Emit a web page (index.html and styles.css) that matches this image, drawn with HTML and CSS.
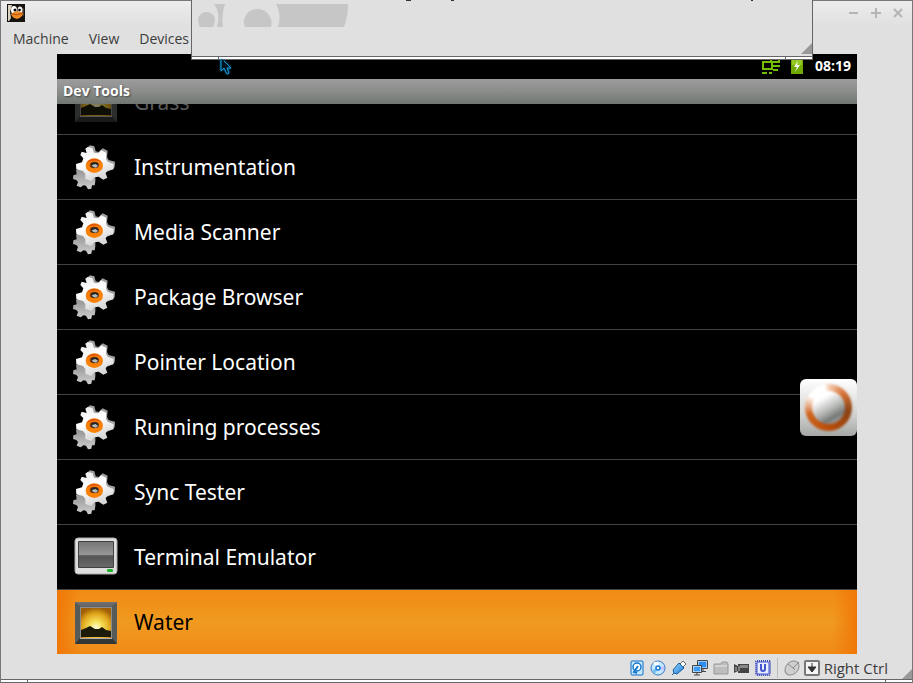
FILE: index.html
```html
<!DOCTYPE html>
<html lang="en">
<head>
    <meta charset="UTF-8">
    <meta name="viewport" content="width=device-width, initial-scale=1.0">
    <title>Dev Tools</title>
    <link rel="stylesheet" href="styles.css">
</head>
<body>
    <!-- shared icons -->
    <svg class="defs" width="0" height="0" aria-hidden="true">
        <defs>
            <linearGradient id="gear-face" x1="0" y1="0" x2="0.4" y2="1">
                <stop offset="0" stop-color="#e8e8e8"/>
                <stop offset="0.5" stop-color="#fff"/>
                <stop offset="1" stop-color="#d8d8d8"/>
            </linearGradient>
            <linearGradient id="gear-back" x1="0" y1="0" x2="0" y2="1">
                <stop offset="0" stop-color="#8d8d8d"/>
                <stop offset="1" stop-color="#cfcfcf"/>
            </linearGradient>
            <radialGradient id="sun" cx="0.5" cy="0.65" r="0.65">
                <stop offset="0" stop-color="#fffde0"/>
                <stop offset="0.3" stop-color="#f8e25a"/>
                <stop offset="0.7" stop-color="#dfa51b"/>
                <stop offset="1" stop-color="#a05f05"/>
            </radialGradient>
            <linearGradient id="frame" x1="0" y1="0" x2="0" y2="1">
                <stop offset="0" stop-color="#727272"/>
                <stop offset="0.3" stop-color="#454a49"/>
                <stop offset="1" stop-color="#303433"/>
            </linearGradient>
            <linearGradient id="glass" x1="0" y1="0" x2="0" y2="1">
                <stop offset="0" stop-color="#777"/>
                <stop offset="0.5" stop-color="#969696"/>
                <stop offset="0.55" stop-color="#555"/>
                <stop offset="1" stop-color="#686868"/>
            </linearGradient>
            <linearGradient id="blue" x1="0" y1="0" x2="1" y2="1">
                <stop offset="0" stop-color="#9ddcff"/>
                <stop offset="1" stop-color="#1475d8"/>
            </linearGradient>
        </defs>
        <symbol id="icon-gear" viewBox="0 0 150 150">
            <path fill="url(#gear-back)" d="M18 84L40 76L82 94L76 106L76 118L74 130L66 130L64 140L54 142L48 131L40 130L32 136L20 131L24 120L19 114L9 111L10 100L20 97Z"/>
            <path fill="#a0a0a0" d="M48 20L60 10L73 13L77 28L86 30L98 19L113 26L111 45L116 54L135 59L134 75L129 82L100 94L60 78L42 46L53 36Z"/>
            <path fill="url(#gear-face)" d="M46 20L53 15L67 18L72 32L85 34L93 25L109 32L108 51L113 59L131 66L130 82L112 86L107 94L112 107L100 113L86 104L73 106L64 117L46 111L46 96L39 87L19 82L18 66L36 61L40 49L31 39L35 29L50 33Z"/>
            <ellipse cx="73" cy="71" rx="26" ry="22" fill="#fa8208"/>
            <path d="M49 65Q54 51 73 50Q88 51 96 62Q84 54 71 56Q57 56 49 65Z" fill="#e0560a"/>
            <ellipse cx="73" cy="69" rx="14" ry="10" fill="#8a3a08"/>
            <ellipse cx="74" cy="69" rx="11" ry="8" fill="#252525"/>
            <path d="M65 70L76 66L84 71L78 77L70 75Z" fill="#b4bcbc"/>
        </symbol>
        <symbol id="icon-picture" viewBox="0 0 42 42">
            <rect width="42" height="42" rx="1" fill="url(#frame)"/>
            <path d="M0 0L5 4V36L0 42ZM42 0L37 4V36L42 42Z" fill="#565b5a"/>
            <rect x="5.500" y="5.500" width="31" height="31" fill="url(#sun)" stroke="#8d8d8d"/>
            <path d="M6 28L11 26L15 24L20 27L24 27L27 25L31 28L36 29V35H6Z" fill="#1d1c0b"/>
            <path d="M5 36.500H37" stroke="#b0b0b0"/>
        </symbol>
        <symbol id="icon-terminal" viewBox="0 0 44 38">
            <rect x="1" y="1" width="42" height="36" rx="3" fill="#dedede" stroke="#aaa"/>
            <rect x="4" y="4" width="36" height="27" rx="1" fill="#404040"/>
            <rect x="5" y="5" width="34" height="25" fill="url(#glass)"/>
            <rect x="33" y="32" width="6" height="3" rx="1" fill="#20b42d"/>
        </symbol>
    </svg>

    <div class="window">
        <header class="titlebar">
            <svg class="app-icon" viewBox="0 0 18 18" width="18" height="18" aria-hidden="true">
                <rect width="18" height="18" fill="#17130f"/>
                <path d="M1 1H5L3 8L4 14L2 17H1Z" fill="#d8d1bd"/>
                <path d="M12 2L17 5V13L14 9Z" fill="#4a3a2d"/>
                <ellipse cx="7" cy="6" rx="3" ry="4" fill="#fff"/>
                <ellipse cx="13" cy="6" rx="2.500" ry="3.500" fill="#eee"/>
                <circle cx="8" cy="6" r="1.500"/>
                <circle cx="12.500" cy="6" r="1.300"/>
                <path d="M4 10Q9 5 16 9Q16 13 10 15Q5 14 4 10Z" fill="#f08a24"/>
                <path d="M5 10Q10 12 16 9" fill="none" stroke="#b74e0b"/>
            </svg>
            <div class="window-buttons">
                <button type="button" aria-label="Minimize"><svg viewBox="0 0 10 10" width="10" height="10"><path d="M0 5H9"/></svg></button>
                <button type="button" aria-label="Maximize"><svg viewBox="0 0 10 10" width="10" height="10"><path d="M0 5H10M5 0V10"/></svg></button>
                <button type="button" aria-label="Close"><svg viewBox="0 0 10 10" width="10" height="10"><path d="M1 1L9 9M9 1L1 9"/></svg></button>
            </div>
        </header>
        <nav class="menubar">
            <button type="button">Machine</button>
            <button type="button">View</button>
            <button type="button">Devices</button>
        </nav>

        <main class="screen">
            <div class="status-bar">
                <svg viewBox="0 0 19 16" width="19" height="16" aria-hidden="true">
                    <path d="M1 4H10V11H1ZM0 15H5M7 15H10M9 1V3M11 4H14M11 8H18M11 12H16M13 4H17V0" fill="none" stroke="#74bd00" stroke-width="2"/>
                </svg>
                <svg viewBox="0 0 12 16" width="12" height="16" aria-hidden="true">
                    <path d="M3 0H9V1H12V16H0V1H3Z" fill="#70a900"/>
                    <path d="M1 2H11V7H1Z" fill="#95ca25"/>
                    <path d="M7 3L3 9H6L4 14L9 7H6Z" fill="#fff"/>
                </svg>
                <time>08:19</time>
            </div>
            <h1 class="app-title">Dev Tools</h1>
            <div class="list">
                <a class="row faded" href="#"><svg class="row-icon"><use href="#icon-picture" x="5" y="3" width="42" height="42"/></svg>Grass</a>
                <a class="row" href="#"><svg class="row-icon"><use href="#icon-gear" width="50" height="50"/></svg>Instrumentation</a>
                <a class="row" href="#"><svg class="row-icon"><use href="#icon-gear" width="50" height="50"/></svg>Media Scanner</a>
                <a class="row" href="#"><svg class="row-icon"><use href="#icon-gear" width="50" height="50"/></svg>Package Browser</a>
                <a class="row" href="#"><svg class="row-icon"><use href="#icon-gear" width="50" height="50"/></svg>Pointer Location</a>
                <a class="row" href="#"><svg class="row-icon"><use href="#icon-gear" width="50" height="50"/></svg>Running processes</a>
                <a class="row" href="#"><svg class="row-icon"><use href="#icon-gear" width="50" height="50"/></svg>Sync Tester</a>
                <a class="row" href="#"><svg class="row-icon"><use href="#icon-terminal" x="4" y="5" width="44" height="38"/></svg>Terminal Emulator</a>
                <a class="row selected" href="#"><svg class="row-icon"><use href="#icon-picture" x="5" y="5" width="42" height="42"/></svg>Water</a>
            </div>
            <button type="button" class="touch-button" aria-label="Menu"><span class="ring"><span class="ball"></span></span></button>
        </main>

        <footer class="vm-status">
            <div class="devices">
                <svg viewBox="0 0 16 16" width="16" height="16" aria-hidden="true">
                    <rect x="2" y="1" width="12" height="14" rx="1" fill="#c5eaff" stroke="#126bc4"/>
                    <circle cx="8" cy="7" r="4" fill="#fff" stroke="#1878cf" stroke-width="1.500"/>
                    <path d="M9 6L5 12L8 13" fill="none" stroke="#1878cf" stroke-width="2"/>
                </svg>
                <svg viewBox="0 0 16 16" width="16" height="16" aria-hidden="true">
                    <circle cx="8" cy="8" r="7" fill="#c5eaff" stroke="#3b78c4"/>
                    <path d="M8 8L3 3Q6 1 9 2Z" fill="#fff"/>
                    <path d="M8 8L14 6V11Z" fill="#c6c2ff"/>
                    <path d="M8 8L5 14L2 10Z" fill="#78bdf6"/>
                    <circle cx="8" cy="8" r="2" fill="#fff" stroke="#1879d0" stroke-width="1.500"/>
                </svg>
                <svg viewBox="0 0 16 16" width="16" height="16" aria-hidden="true">
                    <path d="M9 4L12 1L15 4L12 7Z" fill="#fff" stroke="#666"/>
                    <path d="M1 15L3 13L2 10L8 3L13 8L6 14L3 13" fill="url(#blue)" stroke="#15609f"/>
                </svg>
                <svg viewBox="0 0 16 16" width="16" height="16" aria-hidden="true">
                    <rect x="6" y="1" width="9" height="7" fill="#2c8df0" stroke="#fff"/>
                    <path d="M5.500.500H15.500V8.500H5.500ZM11 9V11M9 11.500H14" fill="none" stroke="#444"/>
                    <rect x="1" y="6" width="8" height="6" fill="#3d9cf5" stroke="#fff"/>
                    <path d="M.5 5.500H9.500V12.500H.5ZM5 13V15M2 15H8" fill="none" stroke="#444"/>
                </svg>
                <svg viewBox="0 0 16 16" width="16" height="16" aria-hidden="true">
                    <path d="M1 4H8L9 2H14L15 4V14H1Z" fill="#bdbdbd" stroke="#999"/>
                    <path d="M2 5H14V7H2Z" fill="#d3d3d3"/>
                </svg>
                <svg viewBox="0 0 16 16" width="16" height="16" aria-hidden="true">
                    <path d="M0 4L4 6V4H15V13H4V11L0 13Z" fill="#444"/>
                    <path d="M6 5H14V8H6Z" fill="#888"/>
                    <path d="M2 7V11M5 6V11" stroke="#bbb"/>
                </svg>
                <svg viewBox="0 0 16 16" width="16" height="16" aria-hidden="true">
                    <rect x="1" y="1" width="14" height="14" rx="1" fill="none" stroke="#3643b5" stroke-width="2" stroke-dasharray="1 1"/>
                    <rect x="2" y="2" width="12" height="12" rx="1" fill="#e9edff" stroke="#4454cb"/>
                    <path d="M6 4V9Q6 11 8 11Q10 11 10 9V4" fill="none" stroke="#4454cb" stroke-width="2"/>
                </svg>
            </div>
            <div class="host-key">
                <svg viewBox="0 0 16 16" width="16" height="16" aria-hidden="true">
                    <ellipse cx="8" cy="8" rx="6" ry="8" transform="rotate(45 8 8)" fill="#cfcfcf" stroke="#8d8d8d"/>
                    <path d="M4 4L9 8L15 2M9 8L11 10" fill="none" stroke="#888"/>
                </svg>
                <svg viewBox="0 0 16 16" width="16" height="16" aria-hidden="true">
                    <rect x="1" y="1" width="14" height="14" rx="1" fill="#f4f4f4" stroke="#777" stroke-width="2"/>
                    <path d="M8 3V8M4 7H12L8 12Z" fill="#333" stroke="#333"/>
                </svg>
                <span>Right Ctrl</span>
            </div>
            <svg class="grip" viewBox="0 0 10 10" width="10" height="10" aria-hidden="true"><path d="M10 0V10H0Z" fill="#999"/></svg>
        </footer>
        <div class="window-edge"><span></span></div>
    </div>

    <!-- second window, mostly above the top edge -->
    <div class="front-window">
        <div class="front-content">
            <svg viewBox="0 0 620 28" width="620" height="28" aria-hidden="true">
                <path d="M214 0H219M259 0H262M559 0H561" stroke="#333" stroke-width="2"/>
                <path d="M8 27Q6 24 6 20A8.500 8 0 0 1 23 20Q23 24 21 27Z" fill="#c6c6c6"/>
                <path d="M22 4H33Q29 16 31 27H25Q29 13 22 4Z" fill="#c6c6c6"/>
                <path d="M53 27Q50 21 54 15Q58 9 66 9Q73 9 77 15Q81 21 79 27Z" fill="#c6c6c6"/>
                <path d="M84 4H156Q156 17 152 27H86Q90 14 84 4Z" fill="#c6c6c6"/>
            </svg>
            <svg class="grip" viewBox="0 0 11 11" width="11" height="11" aria-hidden="true"><path d="M11 0V11H0Z" fill="#999"/></svg>
        </div>
        <div class="window-edge"><span></span></div>
    </div>
    <svg class="pointer" viewBox="0 0 14 18" width="14" height="18" aria-hidden="true">
        <path d="M2 0V12L5 9L8 15L10 14L8 9H12L5 2" fill="#001420" stroke="#0f9fe0"/>
    </svg>
</body>
</html>
```

FILE: styles.css
```css
* {
    box-sizing: border-box;
}

body {
    margin: 0;
    position: relative;
    background-color: #e0e0e0;
    color: #3c3c3c;
    font-family: "Open Sans", "Noto Sans", sans-serif;
    font-size: 14px;
}

button {
    padding: 0;
    border: none;
    background: none;
    color: inherit;
    font: inherit;
}

svg {
    display: block;
    flex-shrink: 0;
}

.defs {
    position: absolute;
}

.window {
    display: flex;
    flex-direction: column;
    min-height: 100vh;
    border: 1px solid #77777b;
    border-bottom: none;
}

/* title bar and menu */
.titlebar {
    display: flex;
    justify-content: space-between;
    align-items: center;
    height: 24px;
    padding: 0 9px 0 6px;
    background: linear-gradient(#ececec, #e0e0e0);
}

.window-buttons {
    display: flex;
    gap: 12px;
}

.window-buttons path {
    stroke: #b5b5b5;
    stroke-width: 2;
}

.menubar {
    display: flex;
    gap: 20px;
    height: 29px;
    padding: 0 12px 2px;
}

/* emulated screen */
.screen {
    position: relative;
    margin: 0 55px 0 56px;
    background-color: #000;
    color: #fff;
}

.status-bar {
    display: flex;
    justify-content: flex-end;
    align-items: center;
    gap: 10px;
    height: 25px;
    padding: 0 6px 2px 0;
}

.status-bar time {
    margin-left: 2px;
    font-weight: bold;
}

.app-title {
    height: 25px;
    margin: 0;
    padding: 0 6px;
    background: linear-gradient(#9c9c9c, #8a8d8a 50%, #717673);
    font-size: 14px;
    line-height: 24px;
    text-shadow: 1px 1px 2px #444;
}

.list {
    overflow: hidden;
}

.row {
    display: flex;
    align-items: center;
    gap: 14px;
    height: 65px;
    padding-left: 13px;
    border-bottom: 1px solid #424242;
    color: #fff;
    font-family: "Noto Sans", sans-serif;
    font-size: 21px;
    text-decoration: none;
}

.row-icon {
    width: 50px;
    height: 50px;
}

.row.faded {
    margin-top: -34px;
    color: #5c5c5c;
}

.row.faded .row-icon {
    opacity: 0.5;
}

.row.selected {
    height: 64px;
    border-bottom: none;
    background: linear-gradient(90deg, #f07808, transparent 3%, transparent 97%, #f07808), linear-gradient(#f18b13, #f09a20 50%, #f08a17);
    color: #000;
}

.touch-button {
    position: absolute;
    top: 325px;
    right: 0;
    width: 57px;
    height: 57px;
    padding: 5px;
    border-radius: 6px;
    background: linear-gradient(#fff, #d2d4d2 60%, #a5a7a5);
}

.ring {
    display: block;
    height: 47px;
    padding: 7px;
    border-radius: 50%;
    background: conic-gradient(#f6d0b8, #d8763a 12%, #8b4214 28%, #b94d0b 50%, #d0651f 70%, #fff 84%, #fff 97%, #f6d0b8);
    filter: blur(1px);
}

.ball {
    display: block;
    height: 33px;
    border-radius: 50%;
    background: linear-gradient(150deg, #fff 25%, #b5b7b5 55%, #767876 75%, #ccc);
}

/* device icons under the screen */
.vm-status {
    display: flex;
    justify-content: flex-end;
    align-items: center;
    flex: 1;
    min-height: 25px;
    padding-top: 3px;
    font-size: 15px;
    line-height: 20px;
}

.devices,
.host-key {
    display: flex;
    align-items: center;
    gap: 5px;
}

.host-key {
    gap: 4px;
    margin: 0 14px 0 6px;
    padding-left: 6px;
    border-left: 1px solid #bbb;
}

.grip {
    align-self: flex-end;
}

.window-edge {
    height: 4px;
    padding: 0 26px;
    border-top: 1px solid #66666a;
    border-bottom: 1px solid #66666a;
    background-color: #fff;
}

.window-edge span {
    display: block;
    height: 2px;
    border: solid #66666a;
    border-width: 0 1px;
}

.front-window {
    position: absolute;
    top: 0;
    left: 191px;
    right: 100px;
    border: solid #66666a;
    border-width: 0 1px;
    background-color: #e0e0e0;
}

.front-content {
    display: flex;
    justify-content: space-between;
    height: 56px;
    padding-bottom: 2px;
    overflow: hidden;
}

.front-content svg:first-child {
    flex-shrink: 1;
    min-width: 0;
    margin-right: -11px;
}

.pointer {
    position: absolute;
    top: 59px;
    left: 219px;
    filter: drop-shadow(0 0 1px #0878b0);
}
```
